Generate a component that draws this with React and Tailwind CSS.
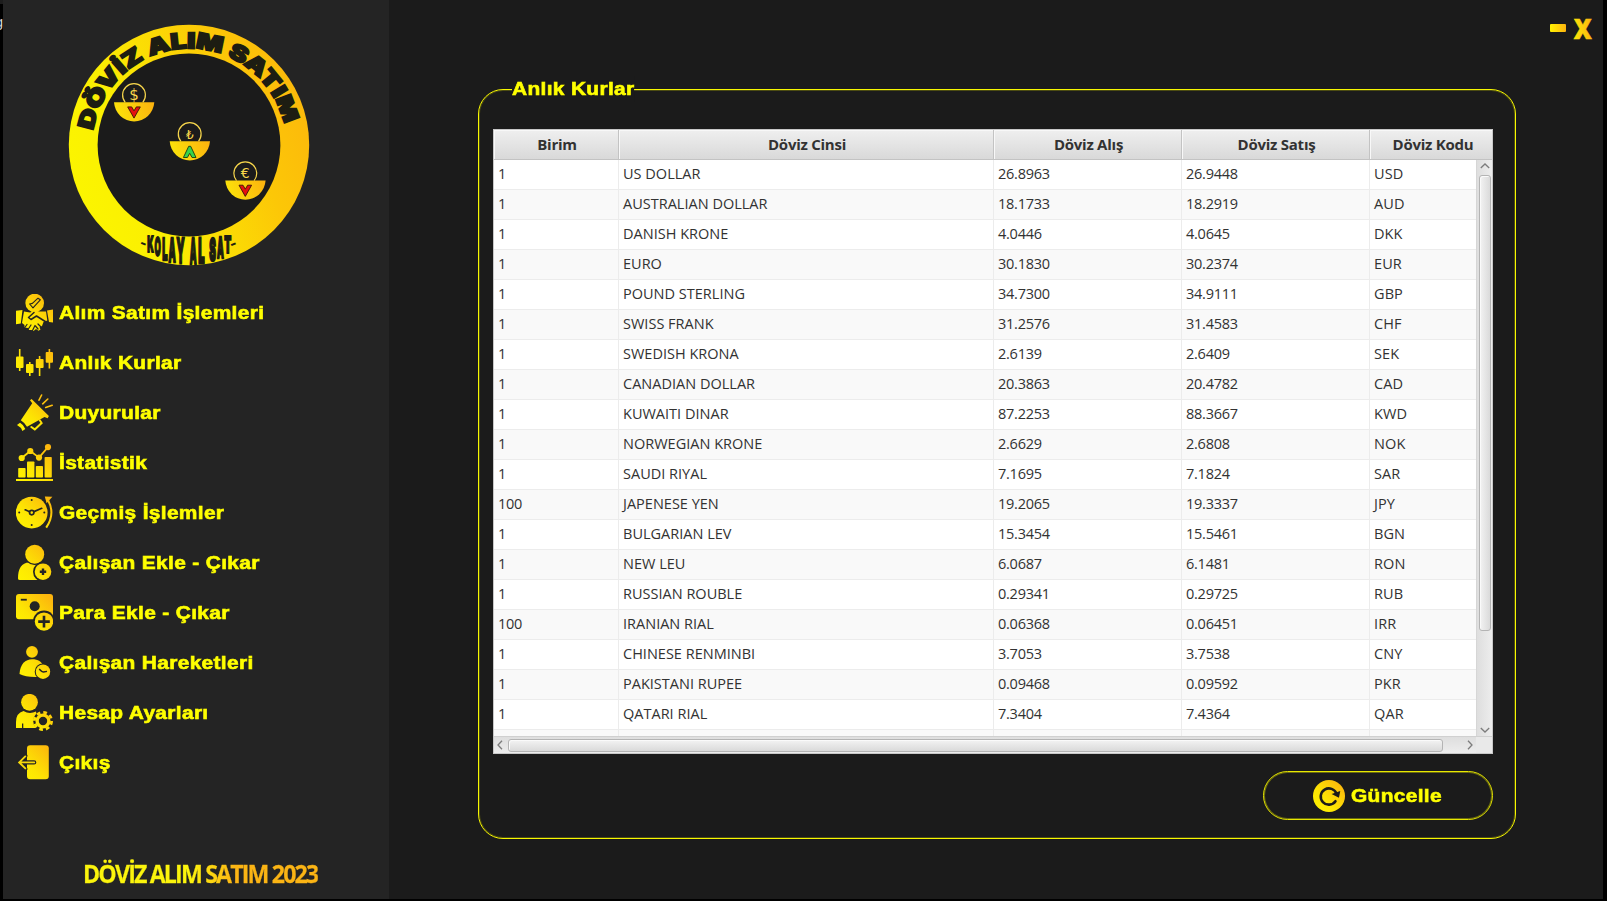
import React from "react";

const RATES = [
  ["1", "US DOLLAR", "26.8963", "26.9448", "USD"],
  ["1", "AUSTRALIAN DOLLAR", "18.1733", "18.2919", "AUD"],
  ["1", "DANISH KRONE", "4.0446", "4.0645", "DKK"],
  ["1", "EURO", "30.1830", "30.2374", "EUR"],
  ["1", "POUND STERLING", "34.7300", "34.9111", "GBP"],
  ["1", "SWISS FRANK", "31.2576", "31.4583", "CHF"],
  ["1", "SWEDISH KRONA", "2.6139", "2.6409", "SEK"],
  ["1", "CANADIAN DOLLAR", "20.3863", "20.4782", "CAD"],
  ["1", "KUWAITI DINAR", "87.2253", "88.3667", "KWD"],
  ["1", "NORWEGIAN KRONE", "2.6629", "2.6808", "NOK"],
  ["1", "SAUDI RIYAL", "7.1695", "7.1824", "SAR"],
  ["100", "JAPENESE YEN", "19.2065", "19.3337", "JPY"],
  ["1", "BULGARIAN LEV", "15.3454", "15.5461", "BGN"],
  ["1", "NEW LEU", "6.0687", "6.1481", "RON"],
  ["1", "RUSSIAN ROUBLE", "0.29341", "0.29725", "RUB"],
  ["100", "IRANIAN RIAL", "0.06368", "0.06451", "IRR"],
  ["1", "CHINESE RENMINBI", "3.7053", "3.7538", "CNY"],
  ["1", "PAKISTANI RUPEE", "0.09468", "0.09592", "PKR"],
  ["1", "QATARI RIAL", "7.3404", "7.4364", "QAR"],
  ["", "", "", "", ""],
];

const HEADERS = ["Birim", "Döviz Cinsi", "Döviz Alış", "Döviz Satış", "Döviz Kodu"];
const COLS = "grid grid-cols-[125px_375px_188px_188px_125px]";
const G = "url(#gold)";
const D = "#242424";

const ICONS = {
  deal: (
    <>
      <circle cx="18.7" cy="9" r="9.3" />
      <path d="M0 16.8 6.5 16 4.8 29.5 0 30.2ZM37 15.5 31 16.5 33 28 37 28.5Z" />
      <path d="M8 17.5 14 18.5 18 17 24 17.5 30 17.5 31.3 26.5 27.5 28 26 32 23.5 33.5 24.5 35.5 22.5 36.8 20 35 17.5 37 15.5 36 13 36 12 34 8.5 33.5 8.5 31 6 29Z" />
      <g fill="none" stroke={D} strokeWidth="1.5" strokeLinejoin="round" strokeLinecap="round">
        <path d="M13.6 10 16.4 9.4 22 4.2 24.3 5.8 17 13.8 13.6 10" strokeWidth="1.1" />
        <path d="M18 18.5 12.5 23.5 15 25.5 20.5 22 30 28" />
        <path d="M11 30.5 8.5 34M15 31 12 35.5M19 31.5 16.5 36.5M22 30 25 33M19.5 32 22 35" strokeWidth="1.2" />
      </g>
    </>
  ),
  candles: (
    <>
      <rect x="0" y="12.5" width="7.5" height="11.5" rx="1" />
      <rect x="10" y="20" width="7.5" height="9" rx="1" />
      <rect x="19.8" y="15" width="7.8" height="9" rx="1" />
      <rect x="29.7" y="8" width="7.3" height="10.8" rx="1" />
      <path d="M2.9 5h1.6v22h-1.6zM13 18h1.6v14h-1.6zM22.8 12h1.6v20h-1.6zM32.6 5h1.6v19.5h-1.6z" />
    </>
  ),
  horn: (
    <>
      <path d="M4.8 26.2 16.2 9.2 14 6.2 15.6 5 32.9 22 31.6 24.3 28.5 23 11 32.8Q8 28 4.8 26.2Z" />
      <path d="M1 31 4 28.8Q8 31 9.3 35L6.4 37Q5 33 1 31Z" />
      <g fill="none" stroke={G} strokeWidth="2" strokeLinecap="round">
        <path d="M15.3 33 18.8 35.4 25.6 29 23.8 26.3" />
        <path d="M23 6.2 25.6 1M26.7 9.8 31.8 5M29.7 13.4 36.2 11.2" strokeWidth="1.6" />
      </g>
    </>
  ),
  stats: (
    <>
      <path d="M0 35h37v2H0z" />
      <rect x="2.2" y="24" width="7.4" height="9.5" rx=".8" />
      <rect x="11" y="17.4" width="7.4" height="16.1" rx=".8" />
      <rect x="19.8" y="22" width="7.2" height="11.5" rx=".8" />
      <rect x="28.6" y="13" width="7.2" height="20.5" rx=".8" />
      <circle cx="5.7" cy="14" r="3.1" />
      <circle cx="14.3" cy="7" r="3.1" />
      <circle cx="23" cy="13.6" r="3.1" />
      <circle cx="32" cy="3.1" r="3.1" />
      <path d="M5.7 14 14.3 7 23 13.6 32 3.1" fill="none" stroke={G} strokeWidth="1.8" />
    </>
  ),
  history: (
    <>
      <circle cx="15.7" cy="18.6" r="15.9" />
      <g fill="none" stroke={D} strokeWidth="1.7" strokeLinecap="round">
        <path d="M9.2 15.8 13.6 17.8M18 17.6 25.7 14.3" />
        <circle cx="15.7" cy="18.6" r="2.2" />
      </g>
      <g fill={D}>
        <circle cx="15.7" cy="6" r="1" />
        <circle cx="15.7" cy="31" r="1" />
        <circle cx="3.2" cy="18.6" r="1" />
        <circle cx="28.3" cy="18.6" r="1" />
      </g>
      <path d="M30.2 33.6Q39.5 20 32.2 6.5" fill="none" stroke={G} strokeWidth="2" />
      <path d="M28.8 2.6 36.4 2.8 30.6 9.2Z" />
    </>
  ),
  userAdd: (
    <>
      <path d="M2 34.5Q2 19 13 18.5Q19 22.5 25 18.5L33 36H4Q2 36 2 34.5Z" />
      <circle cx="18.7" cy="10.4" r="10.6" fill={D} />
      <circle cx="18.7" cy="10.3" r="9.5" />
      <path d="M24 37 28 16 40 18 38 37Z" fill={D} />
      <circle cx="27" cy="27.7" r="10" fill={D} />
      <circle cx="27" cy="27.7" r="8.3" />
      <path d="M27 24.5v6.4M23.8 27.7h6.4" stroke={D} strokeWidth="2.4" />
    </>
  ),
  moneyAdd: (
    <>
      <rect x="0" y="0" width="37" height="25.3" rx="3" />
      <circle cx="18.7" cy="12.3" r="5" fill={D} />
      <path d="M4.8 5.7h6" stroke={D} strokeWidth="1.8" />
      <circle cx="28" cy="27.6" r="11" fill={D} />
      <circle cx="28" cy="27.6" r="9.2" />
      <path d="M28 21.8v11.6M22.2 27.6h11.6" stroke={D} strokeWidth="2.6" />
    </>
  ),
  userClock: (
    <>
      <circle cx="16" cy="7.8" r="5.9" />
      <path d="M3.5 30C4 20 9.5 15.3 16 15.3S25.5 18 27.5 22L22 33Q10 33.5 3.5 30Z" />
      <circle cx="27" cy="27.7" r="8.3" fill={D} />
      <circle cx="27" cy="27.7" r="7.2" />
      <path d="M23.2 25Q26 28 27.5 28L31 27.4" fill="none" stroke={D} strokeWidth="1.3" />
    </>
  ),
  userGear: (
    <>
      <path d="M0 34V28Q0 19 7.5 17Q13.5 20.5 20 17.5L23 34H7.3V29.5H6V34Z" />
      <circle cx="13.5" cy="8.3" r="8.4" />
      <circle cx="27" cy="27" r="9.8" fill={D} />
      <circle cx="27" cy="27" r="5.9" fill="none" stroke={G} strokeWidth="3.4" />
      <circle cx="27" cy="27" r="8.6" fill="none" stroke={G} strokeWidth="2.8" strokeDasharray="3.7 3.06" />
    </>
  ),
  exit: (
    <>
      <rect x="11" y="1.3" width="21.8" height="34" rx="3.2" />
      <path d="M3.5 18.4h14.7M9.3 11.8 3.2 18.4 9.3 25" fill="none" stroke={D} strokeWidth="4.2" strokeLinecap="round" />
      <path d="M3.5 18.4h14.7M9.3 12.4 3.2 18.4 9.3 24.4" fill="none" stroke="#f6d80a" strokeWidth="1.9" strokeLinecap="round" />
    </>
  ),
};

const MENU = [
  ["deal", "Alım Satım İşlemleri"],
  ["candles", "Anlık Kurlar"],
  ["horn", "Duyurular"],
  ["stats", "İstatistik"],
  ["history", "Geçmiş İşlemler"],
  ["userAdd", "Çalışan Ekle - Çıkar"],
  ["moneyAdd", "Para Ekle - Çıkar"],
  ["userClock", "Çalışan Hareketleri"],
  ["userGear", "Hesap Ayarları"],
  ["exit", "Çıkış"],
];

function Coin({ x, y, sign, size, up }) {
  return (
    <g transform={`translate(${x} ${y})`}>
      <path d="M-8.8 0A11.4 11.4 0 1 1 8.8 0" fill="none" stroke="#f7d64c" strokeWidth="1.2" />
      <text x="0" y="-2.2" textAnchor="middle" fontSize={size} fill="#f7d64c" fontFamily="DejaVu Sans, sans-serif">
        {sign}
      </text>
      <path d="M-20 0H20.3A20.2 20.6 0 0 1-20 0Z" fill="url(#bowl)" />
      {up ? (
        <path d="M-1 5H1L6.3 16.2H2.3L0 12 -2.3 16.2H-6.3Z" fill="#37d24a" stroke="#1b3a12" strokeWidth=".9" />
      ) : (
        <path d="M-6.3 4.6H-2.3L0 8.6 2.3 4.6H6.3L0 15.8Z" fill="#e60f0f" stroke="#3a1208" strokeWidth=".9" />
      )}
    </g>
  );
}

/* letter, left, right, top, bottom */
const MOTTO = [
  ["K", 79.3, 85.8, 212, 228],
  ["O", 86.5, 92.8, 213, 232],
  ["L", 94.2, 99.5, 213.5, 235.5],
  ["A", 100.6, 107.8, 214, 238],
  ["Y", 108.4, 116.5, 214, 239],
  ["A", 121.8, 128.6, 214, 239.5],
  ["L", 130.3, 136.6, 214, 239],
  ["S", 141.3, 148, 213.5, 236.5],
  ["A", 149, 155.8, 213, 234],
  ["T", 156.3, 163.3, 212, 229],
];

function Logo() {
  return (
    <svg width="242" height="242" viewBox="0 0 242 242" className="shrink-0">
      <defs>
        <linearGradient id="ring" x1="0" y1=".75" x2="1" y2=".35">
          <stop offset="0" stopColor="#fbf600" />
          <stop offset=".3" stopColor="#fbee02" />
          <stop offset=".75" stopColor="#fcc707" />
          <stop offset="1" stopColor="#fcb90b" />
        </linearGradient>
        <linearGradient id="bowl" x1="0" y1=".5" x2="1" y2=".3">
          <stop offset="0" stopColor="#fbe40a" />
          <stop offset="1" stopColor="#fcb40e" />
        </linearGradient>
        <path id="arc" d="M25.2 106.5A97.2 97.2 0 0 1 217.2 106.5" />
      </defs>
      <circle cx="121" cy="121" r="120.2" fill="url(#ring)" />
      <circle cx="121" cy="121" r="91.4" fill="#1b1b1b" />
      <text fontFamily="Inter, sans-serif" fontWeight="900" fontSize="22" fill="#1d1d12" stroke="#1d1d12" strokeWidth="1.7" textLength="268" lengthAdjust="spacingAndGlyphs">
        <textPath href="#arc" textLength="268" lengthAdjust="spacingAndGlyphs">DÖVİZ ALIM SATIM</textPath>
      </text>
      <g fill="#1d1d12" fontFamily="Inter, sans-serif" fontWeight="900">
        {MOTTO.map(([c, l, r, t, b], i) => (
          <text
            key={i}
            fontSize="10"
            textLength="7"
            lengthAdjust="spacingAndGlyphs"
            stroke="#1d1d12"
            strokeWidth=".8"
            transform={`translate(${l} ${b}) scale(${(r - l) / 7} ${(b - t) / 7.27})`}
          >
            {c}
          </text>
        ))}
        <text fontSize="14" transform="translate(70.8 222.3) rotate(22)">-</text>
        <text fontSize="14" transform="translate(163.8 225.3) rotate(-22)">-</text>
      </g>
      <Coin x={66} y={78.3} sign="$" size={15} />
      <Coin x={121.7} y={117.3} sign="₺" size={12} up />
      <Coin x={177.3} y={156.6} sign="€" size={14} />
    </svg>
  );
}

function Chevron({ d, className }) {
  return (
    <svg width="10" height="10" viewBox="0 0 10 10" className={className}>
      <path d={d} fill="none" stroke="#7c7c7c" strokeWidth="1.3" />
    </svg>
  );
}

const HEAVY =
  "font-['Liberation_Sans',sans-serif] font-bold text-[#ffff00] whitespace-nowrap text-[18.67px] tracking-[0.3px] origin-left scale-x-[1.12] [-webkit-text-stroke:0.6px_#ffff00]";

function RateTable() {
  return (
    <div className="flex h-[625px] w-[1000px] flex-col border border-[#c8c8c8] bg-white font-['Open_Sans',sans-serif] text-[#323232]">
      <div className="h-[30px] shrink-0 overflow-hidden">
        <div className={`${COLS} h-[30px] w-[1001px]`}>
          {HEADERS.map((h) => (
            <div
              key={h}
              className="flex items-center justify-center border-r border-b border-[#c3c3c3] bg-linear-to-b from-[#efefef] to-[#d9d9d9] pb-px pl-[2px] text-[15px] leading-5 font-bold tracking-[-0.25px] shadow-[inset_1px_1px_0_#f8f8f8]"
            >
              {h}
            </div>
          ))}
        </div>
      </div>
      <div className="flex h-[576px] shrink-0">
        <div className="w-[982px] overflow-hidden">
          {RATES.map((row, i) => (
            <div key={i} className={`${COLS} h-[30px] w-[1001px] ${i % 2 ? "bg-[#f9f9f9]" : "bg-white"}`}>
              {row.map((cell, j) => (
                <div
                  key={j}
                  className={`border-r border-b border-[#ececec] pl-1 text-[14.5px] leading-[27px] whitespace-nowrap ${j === 1 ? "tracking-[0.01px]" : j === 4 ? "tracking-[0.1px]" : "tracking-[-0.25px]"}`}
                >
                  {cell}
                </div>
              ))}
            </div>
          ))}
        </div>
        <div className="flex w-4 flex-col items-center justify-between border-l border-[#d6d6d6] bg-linear-to-r from-[#dedede] to-[#ededed] pt-px pb-px">
          <Chevron d="M0.8 7 5 3 9.2 7" />
          <div className="mt-1 mb-auto h-[456px] w-3 rounded-[3px] border border-[#b4b4b4] bg-linear-to-r from-[#f3f3f3] to-[#dadada] shadow-[inset_1px_1px_0_#fafafa]" />
          <Chevron d="M0.8 3 5 7 9.2 3" />
        </div>
      </div>
      <div className="flex grow items-center border-t border-[#d0d0d0] bg-linear-to-b from-[#dedede] to-[#ededed]">
        <Chevron d="M7 0.8 3 5 7 9.2" className="ml-px" />
        <div className="ml-[3px] h-[13px] w-[935px] rounded-[3px] border border-[#b4b4b4] bg-linear-to-b from-[#f3f3f3] to-[#dadada] shadow-[inset_1px_1px_0_#fafafa]" />
        <Chevron d="M3 0.8 7 5 3 9.2" className="ml-[22px]" />
        <div className="ml-auto h-full w-4 bg-[#e9e9e9]" />
      </div>
    </div>
  );
}

export default function App() {
  return (
    <div className="flex h-[901px] w-[1607px] overflow-hidden bg-black pb-[2px]">
      <svg width="0" height="0" className="absolute">
        <defs>
          <linearGradient id="gold" gradientUnits="userSpaceOnUse" x1="3" y1="34" x2="35" y2="3">
            <stop offset="0" stopColor="#fff200" />
            <stop offset=".35" stopColor="#fde603" />
            <stop offset="1" stopColor="#fcb40e" />
          </linearGradient>
        </defs>
      </svg>
      <div className="flex w-[3px] shrink-0 justify-end overflow-hidden border-t-4 border-[#1d1d1d] pt-[8px] font-['Liberation_Sans',sans-serif] text-[14px] leading-5 text-[#dcdcdc]">
        <span>g</span>
      </div>
      <aside className="flex w-[386px] shrink-0 flex-col bg-[#242424]">
        <div className="pt-6 pl-[65px]">
          <Logo />
        </div>
        <nav className="mt-[21px] flex flex-col">
          {MENU.map(([icon, label]) => (
            <div key={label} className="flex h-[50px] items-center gap-[6px] pl-[13px]">
              <svg width="37" height="37" viewBox="0 0 37 37" fill={G}>
                {ICONS[icon]}
              </svg>
              <span className={`${HEAVY} pt-px`}>{label}</span>
            </div>
          ))}
        </nav>
        <div className="mt-[68px] ml-[80px] w-max origin-left scale-x-[0.928] bg-linear-to-r from-[#fbf40c] from-45% to-[#fbb414] to-65% bg-clip-text font-['Open_Sans',sans-serif] text-[25px] leading-9 font-bold tracking-[-2px] whitespace-nowrap text-transparent [-webkit-text-stroke:0.3px_transparent]">
          DÖVİZ ALIM SATIM 2023
        </div>
      </aside>
      <main className="relative w-[1214px] bg-[#1b1b1b] pt-[89px] pl-[89px]">
        <div className="absolute top-[18px] right-[10px] flex items-start">
          <div className="mt-[6px] h-[8px] w-4 rounded-[1px] bg-linear-to-r from-[#fff200] to-[#fcb40e]" />
          <svg width="20" height="22" viewBox="0 0 20 22" className="ml-[7px]">
            <text x="0.8" y="21" fontFamily="Open Sans, sans-serif" fontWeight="800" fontSize="28.5" textLength="18" lengthAdjust="spacingAndGlyphs" fill="url(#bowl)" stroke="url(#bowl)" strokeWidth=".5">
              X
            </text>
          </svg>
        </div>
        <section className="relative h-[750px] w-[1038px] rounded-[25px] border border-[#f8f800] pt-[39px] pl-[14px] shadow-[inset_0_0_0_1px_#4c4c12]">
          <h1 className={`${HEAVY} absolute -top-[14px] left-[33px] bg-[#1b1b1b] leading-[26px]`}>Anlık Kurlar</h1>
          <RateTable />
          <button className="mt-[17px] ml-[770px] flex h-[49px] w-[230px] items-center gap-[6px] rounded-[25px] border border-[#e8e800] pl-[49px] shadow-[inset_0_0_0_1px_#6a6a10]">
            <svg width="32" height="32" viewBox="0 0 37 37" fill={G}>
              <circle cx="18.5" cy="18.5" r="18.5" />
              <path d="M26 24.5A9.4 9.4 0 1 1 27.2 16" fill="none" stroke="#1b1b1b" strokeWidth="3" strokeLinecap="round" />
              <path d="M21.5 16.2 31.5 12.8 30 20.5Z" fill="#1b1b1b" />
            </svg>
            <span className={`${HEAVY} pt-px`}>Güncelle</span>
          </button>
        </section>
      </main>
    </div>
  );
}
